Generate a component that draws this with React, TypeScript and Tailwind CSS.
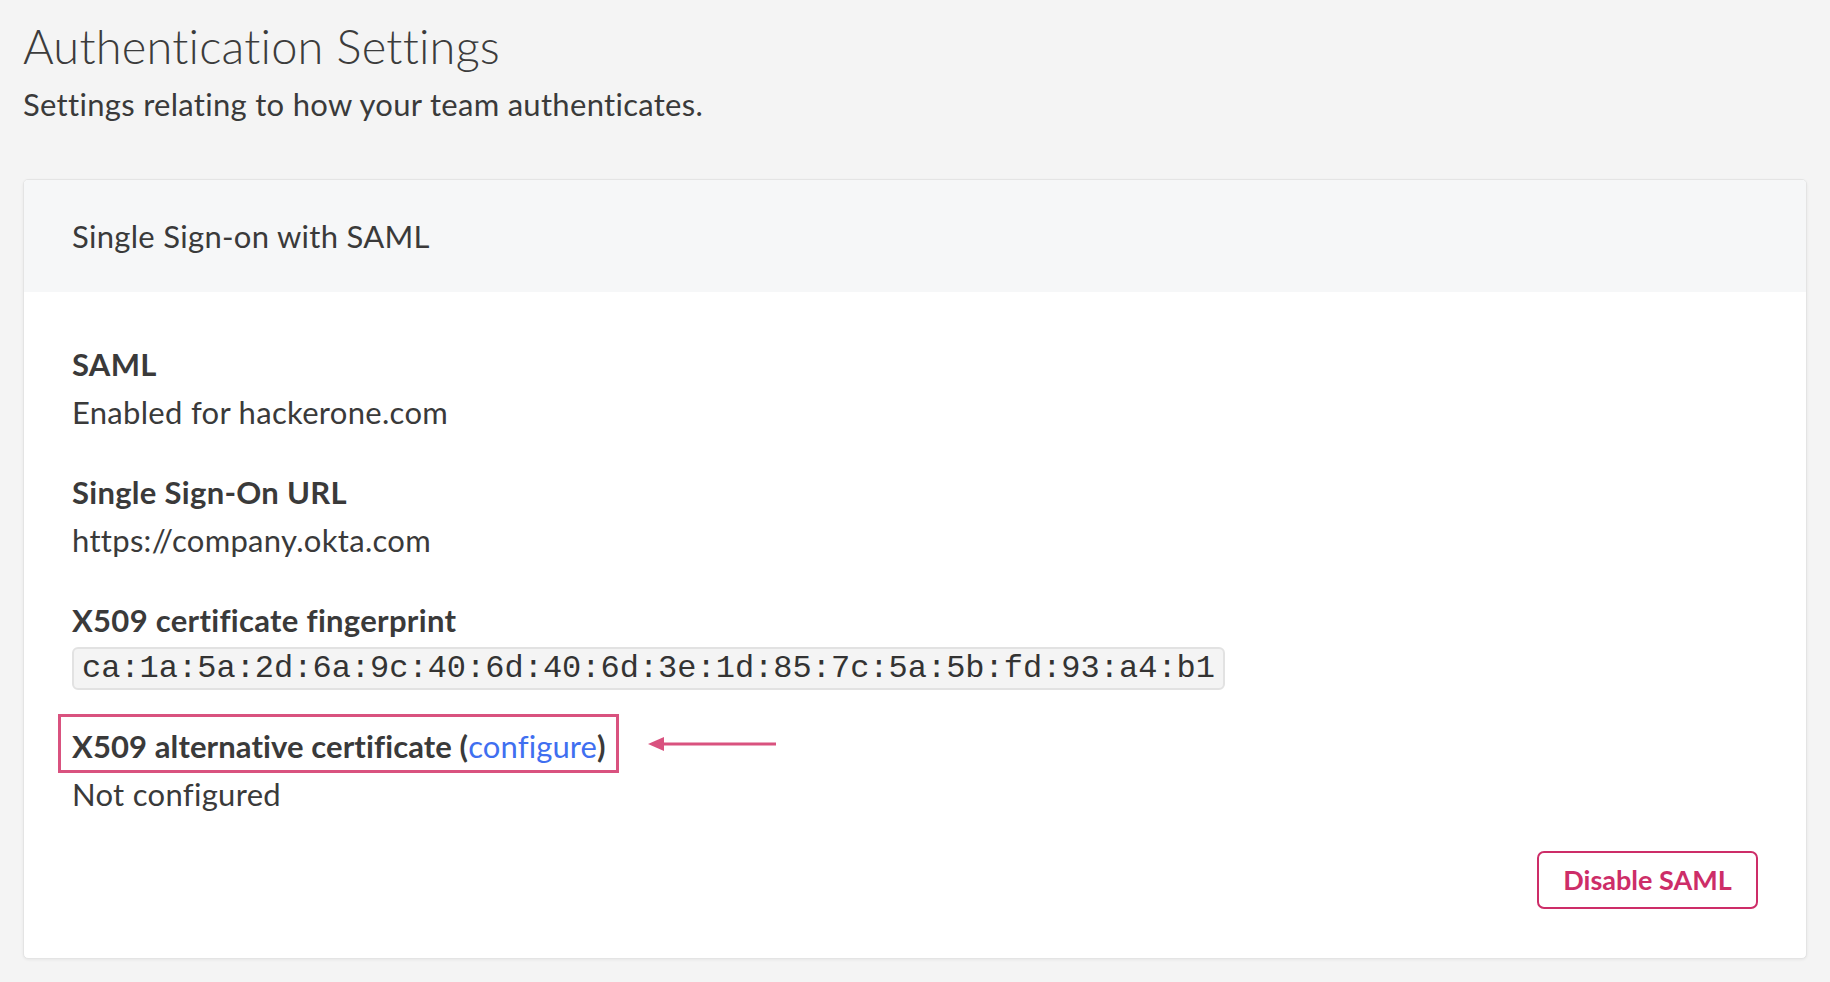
import React from "react";

function Field({ label, children }: { label: React.ReactNode; children: React.ReactNode }) {
  return (
    <div className="mb-[32px]">
      <div className="h-[48px] leading-[48px] font-bold text-[31px] text-[#3a3a3a]">{label}</div>
      {children}
    </div>
  );
}

export default function App() {
  return (
    <div
      className="min-h-[982px] w-full bg-[#f4f4f4] text-[#3a3a3a] tracking-[0.3px]"
      style={{ fontFamily: "Lato, 'Noto Sans', sans-serif" }}
    >
      <div className="px-[23px] pt-[18px]">
        <h1 className="text-[47px] font-light leading-[56px] tracking-[0.2px] text-[#3c3c3c]">Authentication Settings</h1>
        <p className="mt-[10px] text-[31px] leading-[40px] text-[#3a3a3a]">Settings relating to how your team authenticates.</p>
      </div>
      <div className="mx-[23px] mt-[55px] rounded-[5px] border border-[#e4e4e4] bg-white shadow-[0_1px_3px_rgba(0,0,0,0.06)] overflow-hidden">
        <div className="h-[112px] bg-[#f6f7f8] px-[48px] flex items-center text-[31px] text-[#3a3a3a]">
          Single Sign-on with SAML
        </div>
        <div className="px-[48px] pt-[48px] pb-[49px]">
          <Field label="SAML">
            <div className="h-[48px] leading-[48px] text-[31px]">Enabled for hackerone.com</div>
          </Field>
          <Field label="Single Sign-On URL">
            <div className="h-[48px] leading-[48px] text-[31px]">https://company.okta.com</div>
          </Field>
          <Field label="X509 certificate fingerprint">
            <div className="mt-[3px] inline-flex h-[43px] items-center rounded-[6px] border-2 border-[#e2e2e2] bg-[#f4f4f4] px-[8px] text-[32px] tracking-normal text-[#333]" style={{ fontFamily: "'Liberation Mono', 'Courier New', monospace" }}>
              ca:1a:5a:2d:6a:9c:40:6d:40:6d:3e:1d:85:7c:5a:5b:fd:93:a4:b1
            </div>
          </Field>
          <div>
            <div className="relative h-[48px] leading-[48px] font-bold text-[31px] tracking-[0.1px] text-[#3a3a3a]">
              <span className="pointer-events-none absolute left-[-14px] top-[-8px] h-[59px] w-[561px] border-[3px] border-[#d9527f]" />
              <span className="relative">
                X509 alternative certificate (<a className="font-normal text-[#3f6ff0]" href="#">configure</a>)
              </span>
              <svg className="absolute left-[576px] top-[13px]" width="130" height="22" viewBox="0 0 130 22">
                <line x1="12" y1="9" x2="128" y2="9" stroke="#d9527f" strokeWidth="3" />
                <path d="M0 9 L16 2 L16 16 Z" fill="#d9527f" />
              </svg>
            </div>
            <div className="h-[48px] leading-[48px] text-[31px]">Not configured</div>
          </div>
          <div className="mt-[33px] flex justify-end">
            <button className="h-[58px] w-[221px] rounded-[7px] border-2 border-[#cd2d68] bg-white text-[27px] font-bold tracking-normal text-[#cd2d68]">
              Disable SAML
            </button>
          </div>
        </div>
      </div>
    </div>
  );
}
